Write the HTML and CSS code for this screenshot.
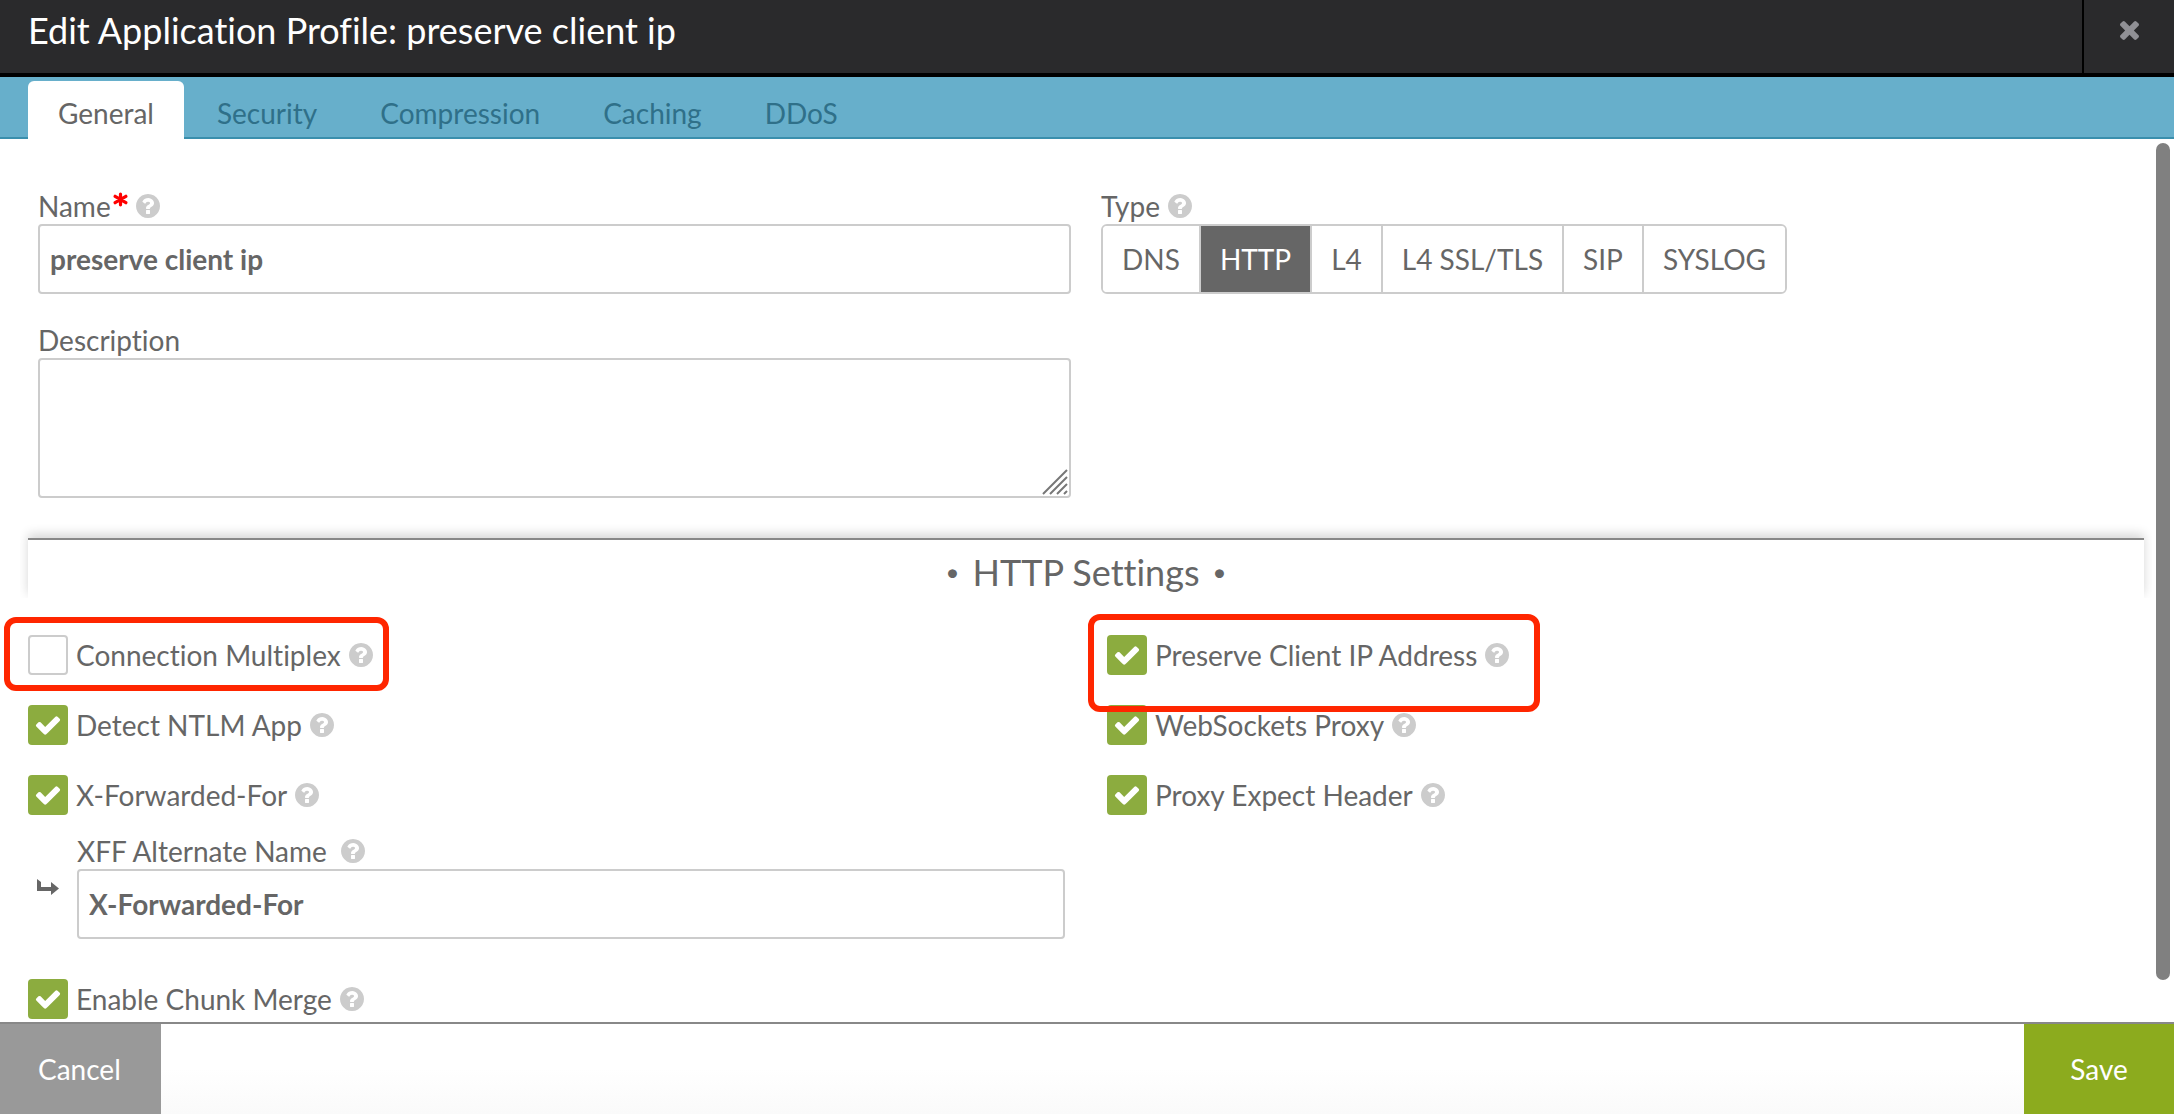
FILE: index.html
```html
<!DOCTYPE html>
<html lang="en">
<head>
<meta charset="utf-8">
<meta name="viewport" content="width=device-width, initial-scale=1">
<title>Edit Application Profile</title>
<link rel="stylesheet" href="styles.css">
</head>
<body>
<svg class="sprite" aria-hidden="true">
  <symbol id="help" viewBox="128 128 1536 1536"><path d="M1024 1376v-192q0-14-9-23t-23-9h-192q-14 0-23 9t-9 23v192q0 14 9 23t23 9h192q14 0 23-9t9-23zm256-672q0-88-55.5-163t-138.5-116-170-41q-243 0-371 213-15 24 8 42l132 100q7 6 19 6 16 0 25-12 53-68 86-92 34-24 86-24 48 0 85.5 26t37.5 59q0 38-20 61t-68 45q-63 28-115.5 86.5t-52.5 125.5v36q0 14 9 23t23 9h192q14 0 23-9t9-23q0-19 21.5-49.5t54.5-49.5q32-18 49-28.5t46-35 44.5-48 28-60.5 12.5-81zm384 192q0 209-103 385.5t-279.5 279.5-385.5 103-385.5-103-279.5-279.5-103-385.5 103-385.5 279.5-279.5 385.5-103 385.5 103 279.5 279.5 103 385.5z"/></symbol>
</svg>

<header class="titlebar">
  <h1 class="title">Edit Application Profile: preserve client ip</h1>
  <button class="close" type="button" aria-label="Close">
    <svg class="close-icon" viewBox="302 366 1188 1188"><path d="M1490 1322q0 40-28 68l-136 136q-28 28-68 28t-68-28l-294-294-294 294q-28 28-68 28t-68-28l-136-136q-28-28-28-68t28-68l294-294-294-294q-28-28-28-68t28-68l136-136q28-28 68-28t68 28l294 294 294-294q28-28 68-28t68 28l136 136q28 28 28 68t-28 68l-294 294 294 294q28 28 28 68z"/></svg>
  </button>
</header>

<nav class="tabs">
  <a class="tab tab-active" href="#general">General</a>
  <a class="tab" href="#security">Security</a>
  <a class="tab" href="#compression">Compression</a>
  <a class="tab" href="#caching">Caching</a>
  <a class="tab" href="#ddos">DDoS</a>
</nav>

<main class="viewport">
  <form class="form" id="profile">
    <div class="basics">
      <div class="stack">
        <div class="field">
          <div class="caption">
            <label for="name">Name</label>
            <svg class="required" viewBox="0 0 14 14"><path d="M7 2v10M2 4l10 6M12 4l-10 6"/></svg>
            <svg class="help"><use href="#help"/></svg>
          </div>
          <input class="text" id="name" type="text" value="preserve client ip">
        </div>
        <div class="field">
          <div class="caption"><label for="description">Description</label></div>
          <div class="area-wrap">
            <textarea class="text area" id="description"></textarea>
            <svg class="grip" viewBox="0 0 26 26"><path d="M1 25L25 1M8 25L25 8M15 25L25 15M22 25L25 22"/></svg>
          </div>
        </div>
      </div>
      <div class="field">
        <div class="caption"><span id="type-label">Type</span><svg class="help"><use href="#help"/></svg></div>
        <div class="segments" role="group" aria-labelledby="type-label">
          <button class="segment" type="button">DNS</button>
          <button class="segment segment-on" type="button">HTTP</button>
          <button class="segment" type="button">L4</button>
          <button class="segment" type="button">L4 SSL/TLS</button>
          <button class="segment" type="button">SIP</button>
          <button class="segment" type="button">SYSLOG</button>
        </div>
      </div>
    </div>

    <div class="section-head">
      <h2 class="section-title"><span class="dot">•</span>HTTP Settings<span class="dot">•</span></h2>
    </div>

    <div class="settings">
      <div class="column">
        <div class="check marked marked-left">
          <input class="box" id="multiplex" type="checkbox"><label for="multiplex">Connection Multiplex</label><svg class="help"><use href="#help"/></svg>
        </div>
        <div class="check">
          <input class="box" id="ntlm" type="checkbox" checked><label for="ntlm">Detect NTLM App</label><svg class="help"><use href="#help"/></svg>
        </div>
        <div class="group">
          <div class="check">
            <input class="box" id="xff" type="checkbox" checked><label for="xff">X-Forwarded-For</label><svg class="help"><use href="#help"/></svg>
          </div>
          <div class="nested">
            <svg class="branch" viewBox="0 0 22 16"><path d="M0 0L4 3V8H14V3L22 9.500L14 16V12H0z"/></svg>
            <div class="field">
              <div class="caption caption-wide"><label for="alt">XFF Alternate Name</label><svg class="help"><use href="#help"/></svg></div>
              <input class="text" id="alt" type="text" value="X-Forwarded-For">
            </div>
          </div>
        </div>
        <div class="check">
          <input class="box" id="chunk" type="checkbox" checked><label for="chunk">Enable Chunk Merge</label><svg class="help"><use href="#help"/></svg>
        </div>
      </div>
      <div class="column">
        <div class="check marked marked-right">
          <input class="box" id="preserve" type="checkbox" checked><label for="preserve">Preserve Client IP Address</label><svg class="help"><use href="#help"/></svg>
        </div>
        <div class="check">
          <input class="box" id="websockets" type="checkbox" checked><label for="websockets">WebSockets Proxy</label><svg class="help"><use href="#help"/></svg>
        </div>
        <div class="check">
          <input class="box" id="expect" type="checkbox" checked><label for="expect">Proxy Expect Header</label><svg class="help"><use href="#help"/></svg>
        </div>
      </div>
    </div>
  </form>
  <div class="scroll-thumb" aria-hidden="true"></div>
</main>

<footer class="actions">
  <button class="action cancel" type="button">Cancel</button>
  <button class="action save" type="submit" form="profile">Save</button>
</footer>
</body>
</html>
```
FILE: styles.css
```css
*,
*::after {
  box-sizing: border-box;
}

body {
  margin: 0;
  height: 100vh;
  display: flex;
  flex-direction: column;
  background: #fff;
  color: #666;
  font-family: Lato, "Open Sans", sans-serif;
  font-size: 28px;
  font-variant-ligatures: none;
  line-height: 36px;
}

button,
input,
textarea {
  font: inherit;
  color: inherit;
}

.sprite {
  display: none;
}

.titlebar {
  flex: none;
  display: flex;
  justify-content: space-between;
  height: 77px;
  background: #2a2a2c;
  border-bottom: 4px solid #000;
}

.title {
  margin: 0;
  padding: 8px 28px;
  color: #fff;
  font-size: 36px;
  font-weight: 400;
  line-height: 44px;
}

.close {
  width: 92px;
  padding: 0 0 12px;
  border: 0;
  border-left: 2px solid #000;
  background: none;
}

.close-icon {
  display: block;
  width: 19px;
  height: 19px;
  margin: 0 auto;
  fill: #909095;
}

.tabs {
  flex: none;
  display: flex;
  gap: 3px;
  height: 62px;
  padding: 4px 28px 0;
  background: linear-gradient(#3a8fad, #3a8fad) bottom / 100% 2px no-repeat #67afcb;
}

.tab {
  padding: 14px 30px 0;
  border-radius: 6px 6px 0 0;
  color: #2f7089;
  text-decoration: none;
}

.tab-active {
  background: #fff;
  color: #666;
}

.viewport {
  position: relative;
  flex: 1;
  min-height: 0;
}

.form {
  height: 100%;
  padding: 49px 30px 40px 28px;
  overflow-y: auto;
  scrollbar-width: none;
}

.scroll-thumb {
  position: absolute;
  top: 4px;
  right: 4px;
  bottom: 42px;
  width: 14px;
  border-radius: 7px;
  background: #808080;
}

.basics {
  display: grid;
  grid-template-columns: 1fr 1fr;
  align-items: start;
  gap: 30px;
  padding: 0 10px;
}

.stack {
  display: flex;
  flex-direction: column;
  gap: 28px;
}

.field {
  flex: 1;
}

.caption {
  display: flex;
  align-items: center;
  gap: 8px;
  height: 36px;
}

.caption-wide {
  gap: 14px;
}

.help {
  flex: none;
  width: 24px;
  height: 24px;
  fill: #ccc;
}

.required {
  width: 15px;
  height: 15px;
  margin: 0 0 14px -6px;
  fill: none;
  stroke: #f00;
  stroke-width: 3px;
  stroke-linecap: round;
}

.text {
  display: block;
  width: 100%;
  height: 70px;
  padding: 0 10px;
  border: 2px solid #ccc;
  border-radius: 4px;
  background: #fff;
  font-weight: 700;
}

.area-wrap {
  position: relative;
}

.area {
  height: 140px;
  resize: none;
}

.grip {
  position: absolute;
  right: 3px;
  bottom: 3px;
  width: 26px;
  height: 26px;
  fill: none;
  stroke: #777;
  stroke-width: 2px;
}

.segments {
  display: flex;
  width: max-content;
  height: 70px;
  border: 2px solid #ccc;
  border-radius: 6px;
  overflow: hidden;
}

.segment {
  padding: 0 19px;
  border: 0;
  border-left: 2px solid #ccc;
  background: #fff;
}

.segment:first-child {
  border-left: 0;
}

.segment-on {
  background: #666;
  color: #fff;
}

.section-head {
  height: 60px;
  margin: 40px 0 37px;
  padding-top: 10px;
  border-top: 2px solid #888;
  background: #fff;
  box-shadow: 0 -4px 10px rgba(0, 0, 0, 0.16);
  clip-path: inset(-16px -8px 0);
}

.section-title {
  display: flex;
  justify-content: center;
  gap: 13px;
  margin: 0;
  font-size: 36px;
  font-weight: 400;
  line-height: 44px;
}

.dot {
  font-size: 24px;
}

.settings {
  display: grid;
  grid-template-columns: 1fr 1fr;
  gap: 42px;
}

.column {
  display: flex;
  flex-direction: column;
  gap: 30px;
}

.check {
  display: flex;
  align-items: center;
  gap: 8px;
  height: 40px;
}

.box {
  appearance: none;
  flex: none;
  width: 40px;
  height: 40px;
  margin: 0;
  border: 2px solid #ccc;
  border-radius: 4px;
  background: #fff;
}

.box:checked {
  border: 0;
  background: #8cac3f url("data:image/svg+xml,%3Csvg xmlns='http://www.w3.org/2000/svg' viewBox='0 0 1792 1792'%3E%3Cpath fill='white' d='M1671 566q0 40-28 68l-724 724-136 136q-28 28-68 28t-68-28l-136-136-362-362q-28-28-28-68t28-68l136-136q28-28 68-28t68 28l294 295 656-657q28-28 68-28t68 28l136 136q28 28 28 68z'/%3E%3C/svg%3E") center / 28px no-repeat;
}

/* Highlight frames drawn round the two related settings */
.marked {
  position: relative;
}

.marked::after {
  content: "";
  position: absolute;
  border: 6px solid #ff2600;
  border-radius: 12px;
  pointer-events: none;
}

.marked-left::after {
  top: -18px;
  left: -24px;
  width: 385px;
  height: 74px;
}

.marked-right::after {
  top: -21px;
  left: -19px;
  width: 452px;
  height: 98px;
}

.nested {
  display: flex;
  gap: 18px;
  margin: 18px 0 10px;
  padding-left: 9px;
}

.branch {
  flex: none;
  width: 22px;
  height: 16px;
  margin-top: 46px;
  fill: #666;
}

.actions {
  flex: none;
  display: flex;
  justify-content: space-between;
  height: 92px;
  border-top: 2px solid #888;
  background: linear-gradient(#fff 50%, #fafafa);
}

.action {
  border: 0;
  color: #fff;
}

.cancel {
  width: 161px;
  padding: 0 0 0 38px;
  background: #999;
  text-align: left;
}

.save {
  width: 150px;
  background: #8cab1e;
}
```
